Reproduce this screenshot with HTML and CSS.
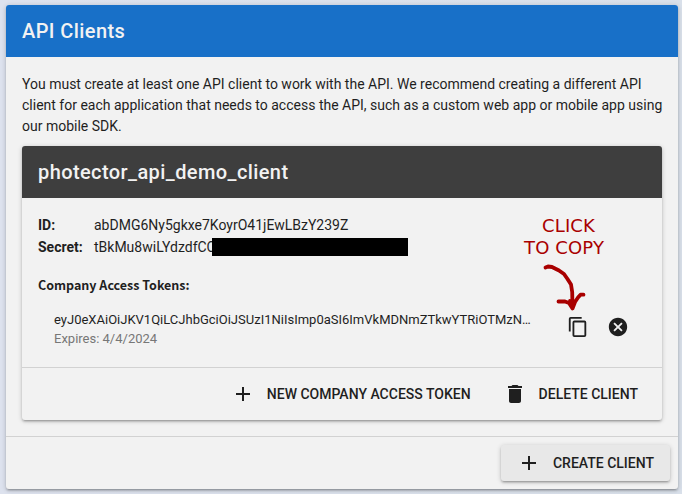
FILE: index.html
```html
<!DOCTYPE html>
<html lang="en">
<head>
<meta charset="utf-8">
<title>API Clients</title>
<link rel="stylesheet" href="styles.css">
</head>
<body>
<main class="card panel">
  <h1 class="toolbar primary">API Clients</h1>
  <div class="panel-body">
    <p class="intro">You must create at least one API client to work with the API. We recommend creating a different API client for each application that needs to access the API, such as a custom web app or mobile app using our mobile SDK.</p>
    <section class="card client">
      <h2 class="toolbar dark">photector_api_demo_client</h2>
      <div class="details">
        <dl class="fields">
          <dt>ID:</dt><dd>abDMG6Ny5gkxe7KoyrO41jEwLBzY239Z</dd>
          <dt>Secret:</dt><dd class="secret">tBkMu8wiLYdzdfCC<span class="redaction"></span></dd>
        </dl>
        <h3 class="tokens-title">Company Access Tokens:</h3>
        <div class="token">
          <div class="token-text">
            <div class="token-value">eyJ0eXAiOiJKV1QiLCJhbGciOiJSUzI1NiIsImp0aSI6ImVkMDNmZTkwYTRiOTMzN…</div>
            <div class="expires">Expires: 4/4/2024</div>
          </div>
          <svg class="icon-small copy" viewBox="0 0 24 24"><path d="M19 21H8V7h11m0-2H8a2 2 0 0 0-2 2v14a2 2 0 0 0 2 2h11a2 2 0 0 0 2-2V7a2 2 0 0 0-2-2m-3-4H4a2 2 0 0 0-2 2v14h2V3h12V1z"/></svg>
          <svg class="icon-small cancel" viewBox="0 0 24 24"><path d="M12 2C6.47 2 2 6.47 2 12s4.47 10 10 10 10-4.47 10-10S17.53 2 12 2zm5 13.59L15.59 17 12 13.41 8.41 17 7 15.59 10.59 12 7 8.41 8.41 7 12 10.59 15.59 7 17 8.41 13.41 12 17 15.59z"/></svg>
        </div>
        <div class="callout">
          <span>CLICK</span>
          <span class="second">TO COPY</span>
        </div>
        <svg class="arrow" viewBox="540 260 50 55"><path d="M545.5 267.5L548 266.500L552 267L559 270.500L564 274L567.500 279L571 284.500L572.200 292L572.500 308M558.500 301.500H565L569 303L572.500 308.500L575 302L578 297.500L580.500 294.700H583.500M570 301L574 302L572.500 308"/></svg>
      </div>
      <div class="actions client-actions">
        <button class="button"><svg class="icon" viewBox="0 0 24 24"><path d="M19 13h-6v6h-2v-6H5v-2h6V5h2v6h6v2z"/></svg><span>NEW COMPANY ACCESS TOKEN</span></button>
        <button class="button"><svg class="icon" viewBox="0 0 24 24"><path d="M6 19c0 1.1.9 2 2 2h8c1.1 0 2-.9 2-2V7H6v12zM19 4h-3.5l-1-1h-5l-1 1H5v2h14V4z"/></svg><span>DELETE CLIENT</span></button>
      </div>
    </section>
  </div>
  <div class="actions panel-actions">
    <button class="button raised"><svg class="icon" viewBox="0 0 24 24"><path d="M19 13h-6v6h-2v-6H5v-2h6V5h2v6h6v2z"/></svg><span>CREATE CLIENT</span></button>
  </div>
</main>
</body>
</html>
```
FILE: styles.css
```css
* { box-sizing: border-box; }
body {
  margin: 0;
  padding: 5px 4px 5px 6px;
  height: 494px;
  overflow: hidden;
  background: linear-gradient(90deg, #dde2ee, #d9e0ea);
  color: #1f1f1f;
  font: 14px/21px Roboto, sans-serif;
}
h1, h2, h3, p, dl, dd { margin: 0; }
.card {
  border-radius: 3px;
  background: #f2f2f2;
  box-shadow: 0 1px 5px rgba(0,0,0,.2), 0 2px 2px rgba(0,0,0,.14), 0 3px 1px -2px rgba(0,0,0,.12);
}
.panel { height: 484px; }
.toolbar {
  height: 52px;
  padding: 0 16px;
  border-radius: 3px 3px 0 0;
  color: #f2f2f2;
  font-size: 20px;
  font-weight: 500;
  line-height: 52px;
  letter-spacing: .41px;
}
.primary { background: #1870c8; }
.dark { background: #3e3e3e; }
.panel-body { padding: 17px 16px 15px; height: 379px; }
.intro { margin-right: -6px; margin-bottom: 9px; }
.client { height: 274px; }
.details { position: relative; height: 169px; padding: 16px; }
.fields {
  display: grid;
  grid-template-columns: 56px 1fr;
  grid-auto-rows: 22px;
  line-height: 22px;
}
dt { font-weight: 700; }
.secret { display: flex; align-items: center; }
.redaction {
  width: 196px;
  height: 18px;
  margin-left: -4px;
  background: #000;
}
.tokens-title {
  margin-top: 17px;
  font: 700 12.5px/20px "Noto Sans CJK JP", sans-serif;
}
.token { display: flex; align-items: center; margin-top: 13px; padding-left: 16px; }
.token-text { width: 477px; padding-top: 2px; margin-bottom: -2px; }
.token-value {
  white-space: nowrap;
  font-size: 13px;
  line-height: 20px;
}
.expires { color: #777; font-size: 13px; line-height: 18px; }
svg { display: block; flex: none; fill: currentColor; }
.icon-small { width: 22px; height: 22px; }
.copy { margin-left: 36px; }
.cancel { margin-left: 18px; }
.callout {
  position: absolute;
  top: 17px;
  left: 502px;
  width: 82px;
  color: #a90000;
  font: 18px/22px "DejaVu Sans", sans-serif;
  letter-spacing: .15px;
  white-space: nowrap;
}
.callout span { display: block; padding-left: 18px; }
.callout .second { padding-left: 0; }
.arrow {
  position: absolute;
  top: 62px;
  left: 518px;
  width: 50px;
  height: 55px;
  fill: none;
  stroke: #a90000;
  stroke-width: 3.8;
  stroke-linecap: round;
  stroke-linejoin: round;
}
.actions {
  display: flex;
  justify-content: flex-end;
  align-items: center;
  height: 53px;
  padding: 0 8px;
  border-top: 1px solid #d2d2d2;
}
.button {
  display: flex;
  align-items: center;
  height: 36px;
  padding: 0 16px;
  border: 0;
  border-radius: 3px;
  background: transparent;
  color: inherit;
  font: 500 14px/24px Roboto, sans-serif;
}
.icon { width: 24px; height: 24px; margin-right: 12px; }
.raised {
  background: #e8e8e8;
  box-shadow: 0 1px 5px rgba(0,0,0,.2), 0 2px 2px rgba(0,0,0,.14), 0 3px 1px -2px rgba(0,0,0,.12);
}
```
